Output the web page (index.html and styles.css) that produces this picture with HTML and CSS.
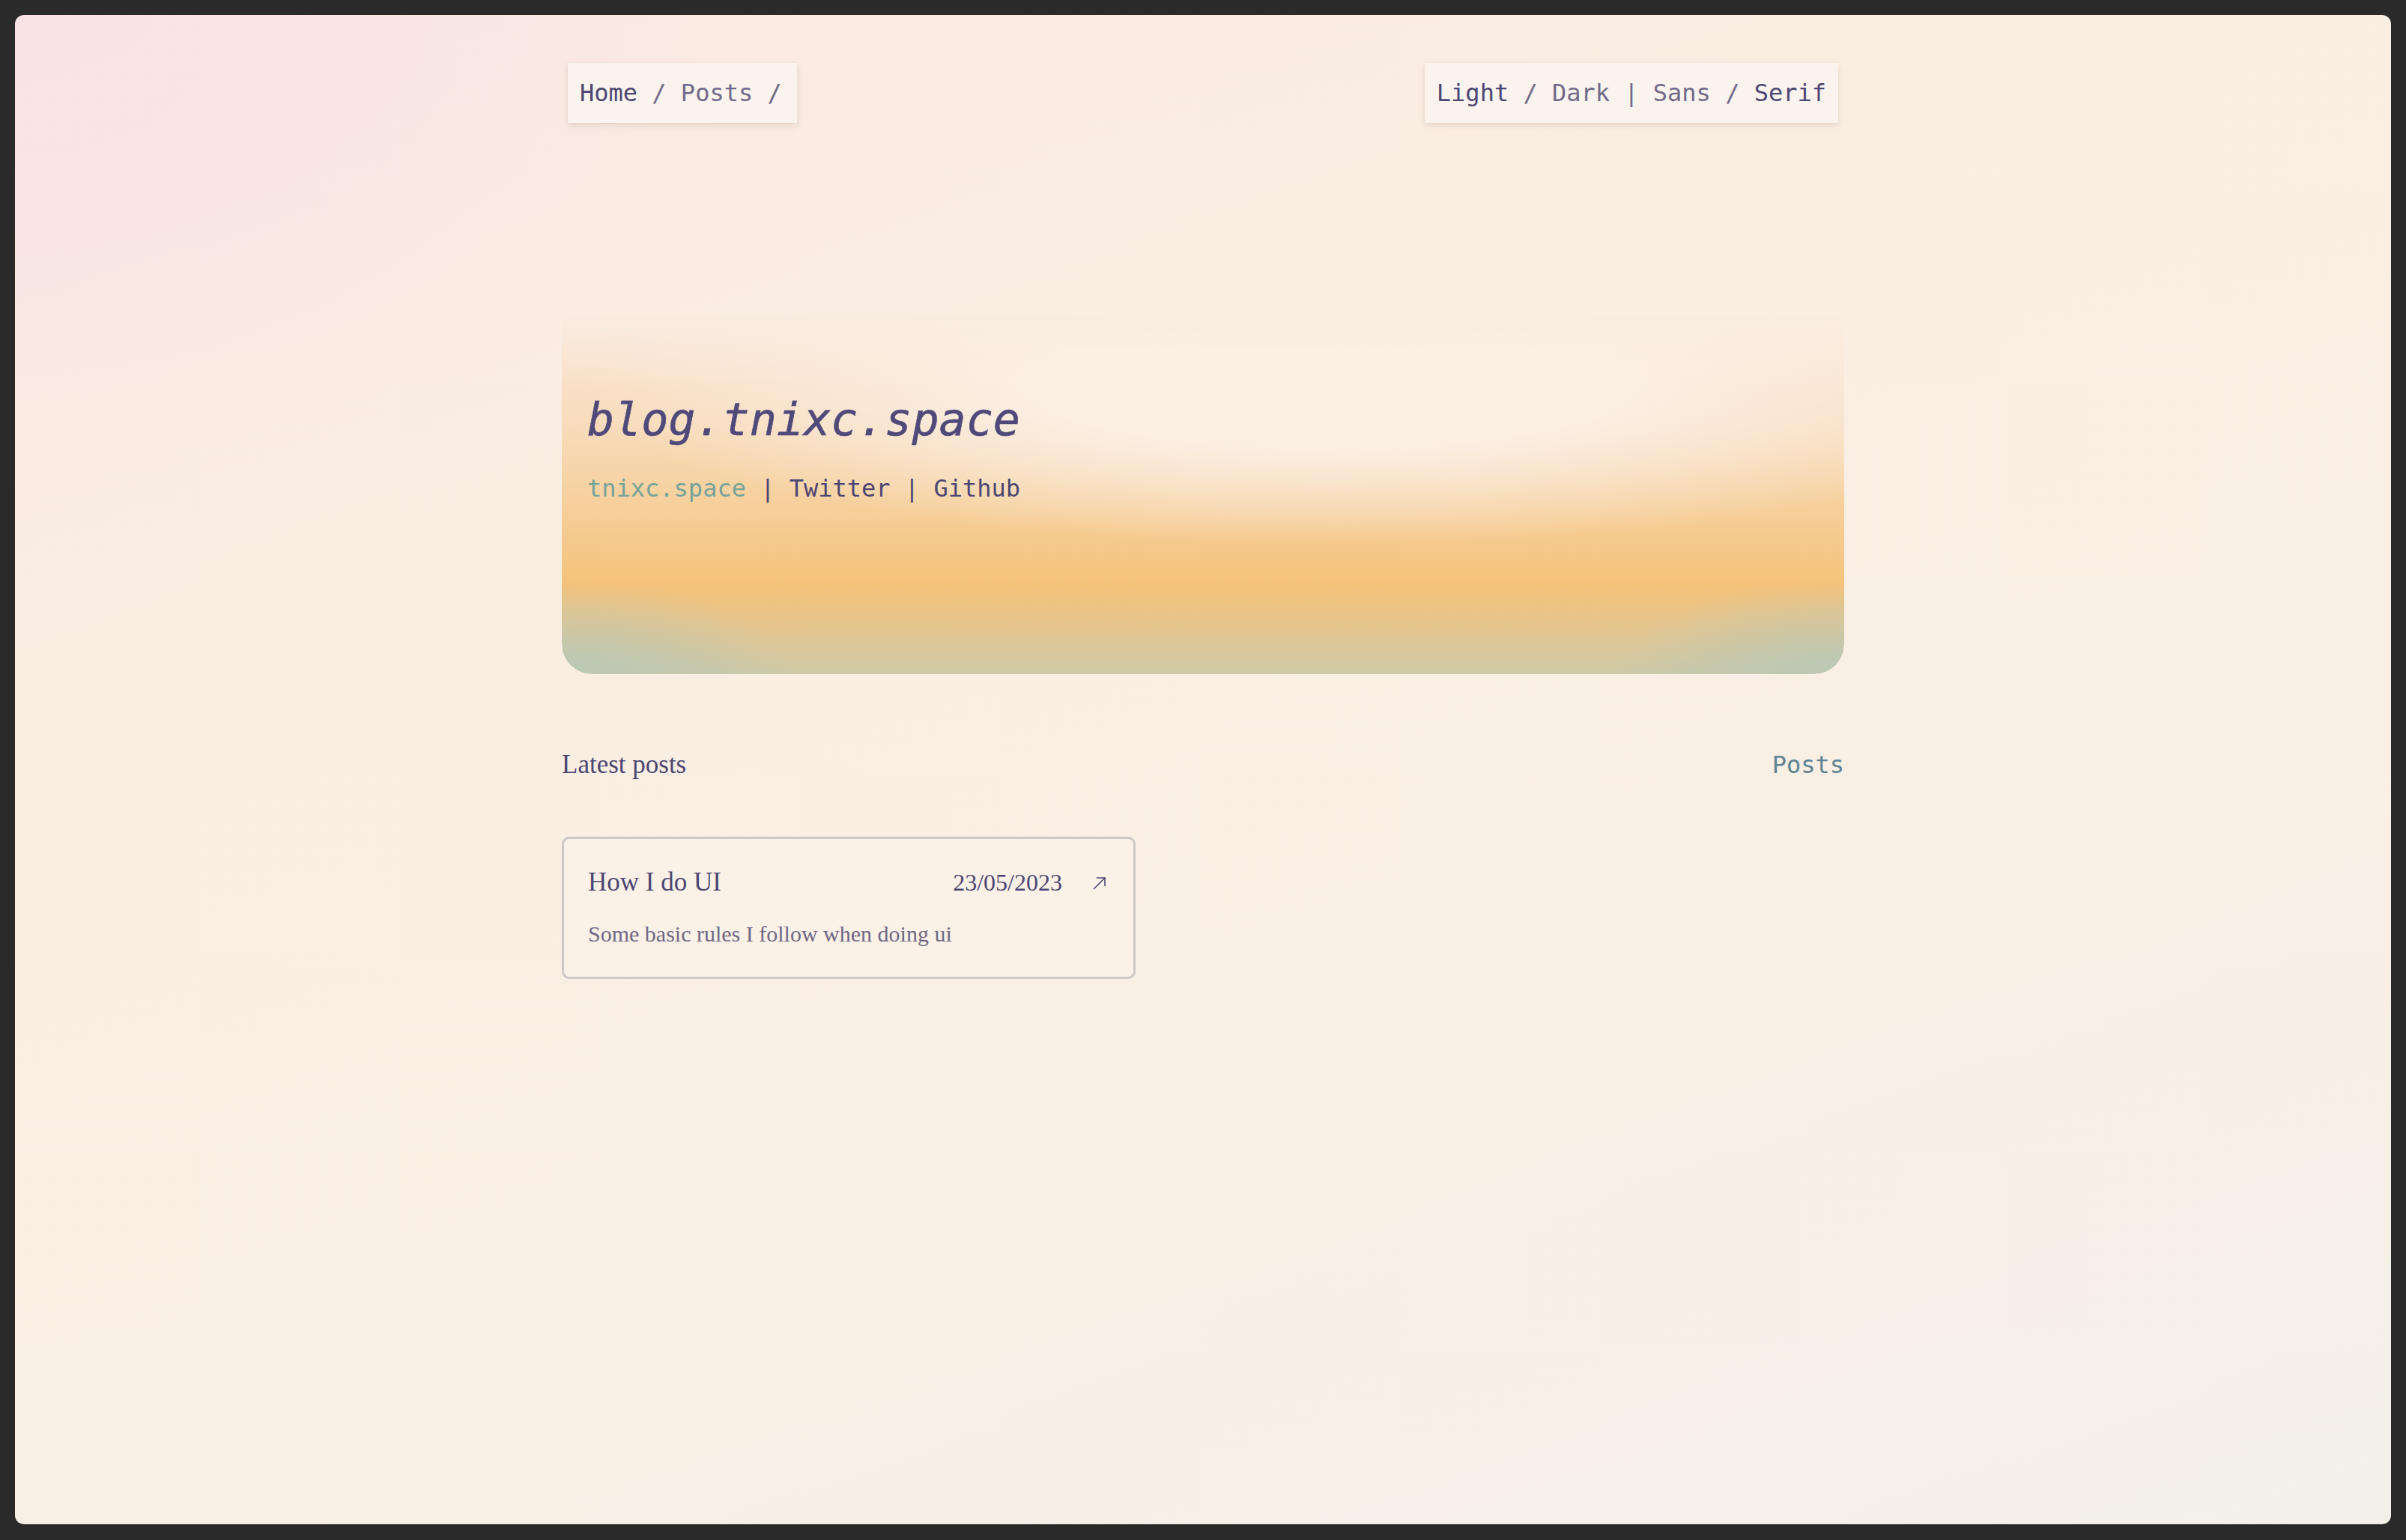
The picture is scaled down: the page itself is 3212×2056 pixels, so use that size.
FILE: index.html
```html
<!DOCTYPE html>
<html lang="en">
<head>
<meta charset="utf-8">
<title>blog.tnixc.space</title>
<link rel="stylesheet" href="styles.css">
</head>
<body>
<div class="window">
  <div class="column">
    <nav class="topnav">
      <div class="navbox"><a class="strong">Home</a><span class="muted"> / </span><a class="muted">Posts</a><span class="muted"> /</span></div>
      <div class="navbox"><a class="strong">Light</a><span class="muted"> / </span><a class="muted">Dark</a><span class="muted"> | </span><a class="muted">Sans</a><span class="muted"> / </span><a class="strong">Serif</a></div>
    </nav>

    <header class="hero">
      <h1 class="hero-title">blog.tnixc.space</h1>
      <p class="hero-links"><a class="accent">tnixc.space</a> | <a>Twitter</a> | <a>Github</a></p>
    </header>

    <div class="section-head">
      <h2 class="section-title">Latest posts</h2>
      <a class="section-link">Posts</a>
    </div>

    <div class="posts">
      <article class="card">
        <div class="card-top">
          <h3 class="card-title">How I do UI</h3>
          <div class="card-meta">
            <span class="card-date">23/05/2023</span>
            <svg class="card-arrow" viewBox="0 0 24 24" width="24" height="24" fill="none" stroke="currentColor" stroke-width="1.6" stroke-linecap="round" stroke-linejoin="round"><path d="M3.5 20.5 L18 6"/><path d="M7.5 6 H18 V16.5"/></svg>
          </div>
        </div>
        <p class="card-desc">Some basic rules I follow when doing ui</p>
      </article>
    </div>
  </div>
</div>
</body>
</html>
```

FILE: styles.css
```css
html, body {
  margin: 0;
  padding: 0;
  height: 100%;
}

body {
  background: #2a2a2a;
  padding: 20px 20px 21px 20px;
  box-sizing: border-box;
}

.window {
  height: 100%;
  border-radius: 12px;
  overflow: hidden;
  background:
    radial-gradient(ellipse 900px 600px at 0% 0%, rgba(250, 226, 228, 0.9) 0%, rgba(250, 226, 228, 0) 100%),
    linear-gradient(160deg, #f9e8e3 0%, #faeee3 30%, #faefe4 60%, #f3f0ea 100%);
  color: #4c4672;
}

.column {
  width: 1712px;
  margin: 0 auto;
  padding-top: 64px;
}

.topnav {
  display: flex;
  justify-content: space-between;
  padding: 0 8px;
}

.navbox {
  background: #fbf3ee;
  padding: 16px 20px 16px 16px;
  font-family: "DejaVu Sans Mono", "Liberation Mono", monospace;
  font-size: 32px;
  line-height: 48px;
  white-space: nowrap;
  box-shadow: 0 4px 10px rgba(120, 80, 60, 0.12), 0 1px 3px rgba(120, 80, 60, 0.08);
}

.navbox:last-child {
  padding: 16px 16px 16px 16px;
}

.strong { color: #4c4672; }
.muted { color: #716a8a; }

.hero {
  position: relative;
  margin-top: 256px;
  height: 480px;
  box-sizing: border-box;
  padding: 104px 32px 0 34px;
  border-radius: 0 0 40px 40px;
  isolation: isolate;
}

.hero::before {
  content: "";
  position: absolute;
  inset: 0;
  z-index: -1;
  border-radius: 0 0 40px 40px;
  background:
    radial-gradient(ellipse 58% 44% at 60% 20%, rgba(251, 239, 228, 1) 0%, rgba(251, 239, 228, 0.95) 40%, rgba(251, 239, 228, 0) 100%),
    radial-gradient(ellipse 18% 26% at 0% 100%, rgba(180, 201, 187, 0.85) 0%, rgba(180, 201, 187, 0) 100%),
    radial-gradient(ellipse 18% 26% at 100% 100%, rgba(180, 201, 187, 0.85) 0%, rgba(180, 201, 187, 0) 100%),
    linear-gradient(to bottom, #f9e6d6 0%, #f8dcbc 30%, #f6cf9a 54%, #f5c27a 75%, #e3c590 88%, #cec9a7 100%);
  -webkit-mask-image: linear-gradient(to bottom, rgba(0,0,0,0.1) 0%, #000 20%);
  mask-image: linear-gradient(to bottom, rgba(0,0,0,0.1) 0%, #000 20%);
}

.hero-title {
  margin: 0;
  font-family: "DejaVu Sans Mono", "Liberation Mono", monospace;
  font-style: italic;
  font-weight: 400;
  font-size: 60px;
  line-height: 72px;
  color: #504a7a;
  -webkit-text-stroke: 0.6px #504a7a;
}

.hero-links {
  margin: 32px 0 0 0;
  font-family: "DejaVu Sans Mono", "Liberation Mono", monospace;
  font-size: 32px;
  line-height: 48px;
  color: #4c4672;
  white-space: nowrap;
}

.accent { color: #76a398; }

.section-head {
  display: flex;
  justify-content: space-between;
  align-items: baseline;
  margin-top: 97px;
}

.section-title {
  margin: 0;
  font-family: "Liberation Serif", "Times New Roman", serif;
  font-weight: 400;
  font-size: 35px;
  line-height: 48px;
  color: #4c4672;
}

.section-link {
  font-family: "DejaVu Sans Mono", "Liberation Mono", monospace;
  font-size: 32px;
  line-height: 48px;
  color: #5a8393;
}

.posts {
  display: grid;
  grid-template-columns: 766px 766px;
  column-gap: 180px;
  margin-top: 72px;
}

.card {
  border: 3px solid #cdc8c6;
  border-radius: 10px;
  padding: 34px 32px 35px 32px;
  background: rgba(252, 244, 236, 0.4);
  font-family: "Liberation Serif", "Times New Roman", serif;
}

.card-top {
  display: flex;
  justify-content: space-between;
  align-items: center;
}

.card-title {
  margin: 0;
  font-weight: 400;
  font-size: 35px;
  line-height: 48px;
  color: #4c4672;
}

.card-meta {
  display: flex;
  align-items: center;
  gap: 39px;
}

.card-date {
  font-size: 32px;
  line-height: 48px;
  color: #4c4672;
}

.card-arrow {
  display: block;
  color: #4c4672;
}

.card-desc {
  margin: 23px 0 0 0;
  font-size: 30px;
  line-height: 44px;
  color: #6f6885;
}
```
